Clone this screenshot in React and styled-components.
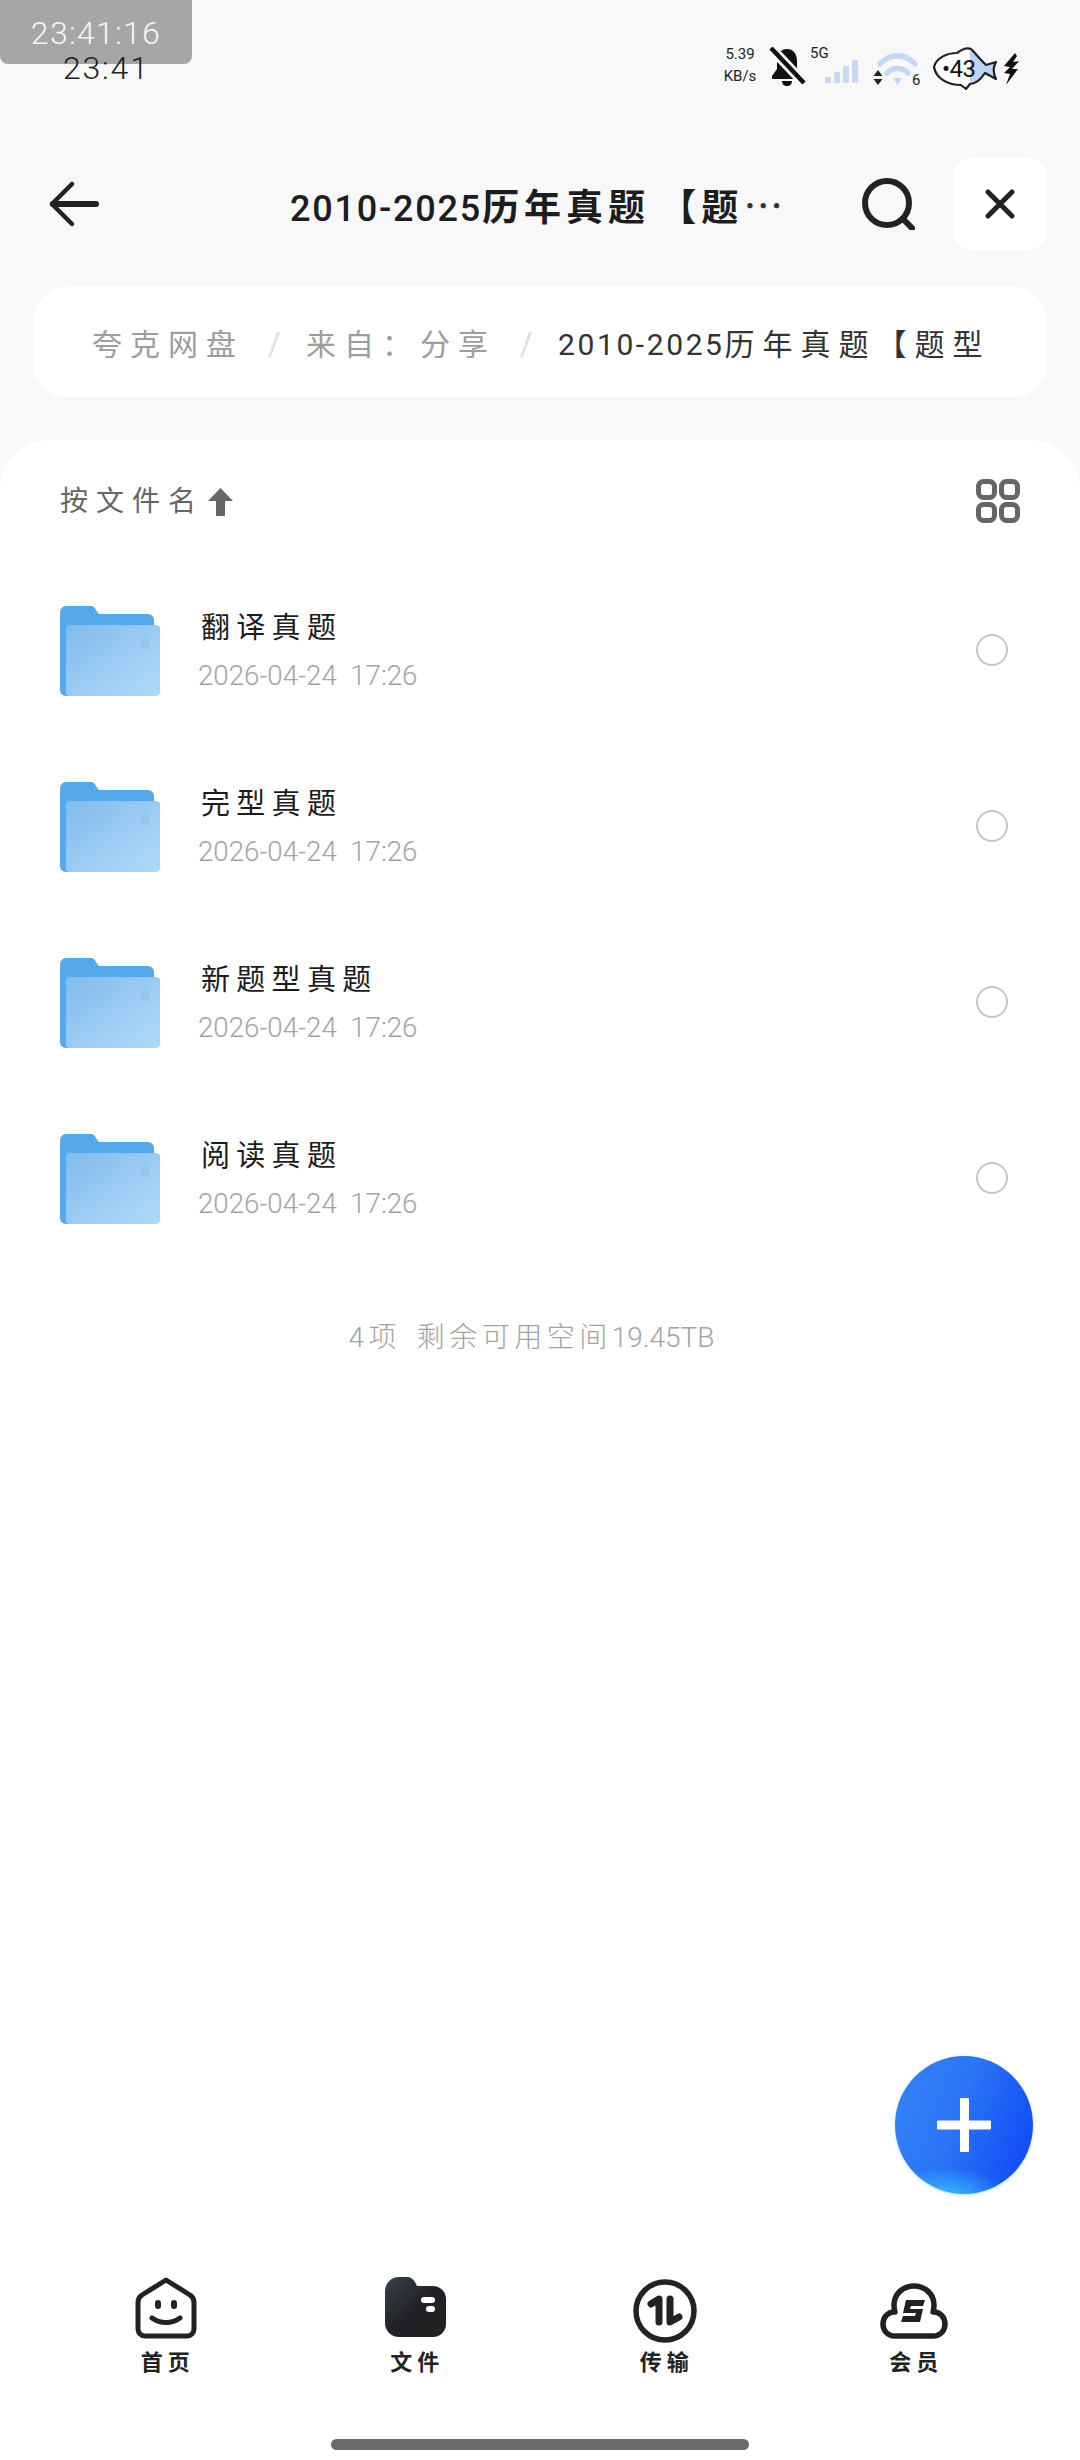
import React from "react";
import styled, { createGlobalStyle } from "styled-components";

const Global = createGlobalStyle`
  html, body { margin: 0; padding: 0; background: #fff; }
  body { font-family: Roboto, "Noto Sans CJK SC", sans-serif; }
  * { box-sizing: border-box; }
`;

const Page = styled.div`
  position: relative;
  width: 1080px;
  height: 2460px;
  overflow: hidden;
  background: #f8f8f8;
  display: flex;
  flex-direction: column;
`;

const TimeBadge = styled.div`
  position: absolute;
  left: 0;
  top: 0;
  width: 192px;
  height: 64px;
  border-radius: 0 0 8px 8px;
  background: #a6a6a6;
  color: #f6f6f6;
  font-size: 32px;
  font-weight: 300;
  line-height: 66px;
  letter-spacing: 1.3px;
  text-align: center;
`;

const StatusBar = styled.div`
  height: 157px;
  flex: none;
  display: flex;
  justify-content: space-between;
  align-items: flex-start;
  padding: 47px 61px 0 63px;
`;

const Clock = styled.div`
  position: relative;
  margin-top: 3px;
  font-size: 32px;
  font-weight: 300;
  line-height: 36px;
  letter-spacing: 1.8px;
  color: #222;
`;

const StatusIcons = styled.div`
  display: flex;
  align-items: flex-start;
`;

const Speed = styled.div`
  width: 48px;
  margin: -4px 4px 0 0;
  font-size: 15px;
  line-height: 22px;
  text-align: center;
  color: #222;
`;

const FiveG = styled.div`
  width: 20px;
  margin: -3px 0 0 4px;
  font-size: 15px;
  line-height: 18px;
  color: #222;
`;

const Fish = styled.div`
  position: relative;
  width: 64px;
  height: 43px;
  margin-left: 10px;
`;

const FishLabel = styled.span`
  position: absolute;
  left: 9px;
  top: 7px;
  font-size: 24px;
  line-height: 30px;
  letter-spacing: -0.5px;
  color: #111;
`;

const Header = styled.header`
  flex: none;
  height: 94px;
  padding: 0 33px 0 49px;
  display: flex;
  align-items: center;
`;

const BackButton = styled.div`
  width: 50px;
  height: 46px;
  flex: none;
`;

const Title = styled.h1`
  margin: 5px 0 0 191px;
  width: 498px;
  flex: none;
  font-size: 37px;
  font-weight: 700;
  line-height: 50px;
  letter-spacing: 5px;
  color: #1d1d1d;
  white-space: nowrap;
`;

const TitleLatin = styled.span`
  font-size: 36px;
  font-weight: 500;
  letter-spacing: 1.8px;
`;

const TitleBracket = styled.span`
  margin-left: 9px;
`;

const TitleDots = styled.span`
  font-family: "Noto Sans CJK SC", sans-serif;
  font-size: 40px;
  font-weight: 400;
  letter-spacing: 0;
  color: #333;
`;

const SearchButton = styled.div`
  width: 54px;
  height: 52px;
  margin-left: 73px;
  flex: none;
`;

const CloseButton = styled.div`
  width: 94px;
  height: 94px;
  margin-left: auto;
  border-radius: 20px;
  background: #fff;
  display: flex;
  align-items: center;
  justify-content: center;
`;

const Crumbs = styled.nav`
  flex: none;
  height: 110px;
  margin: 36px 33px 43px;
  padding: 5px 0 0 59px;
  border-radius: 34px;
  background: #fff;
  display: flex;
  align-items: center;
  white-space: nowrap;
  overflow: hidden;
`;

const Crumb = styled.span`
  font-size: 30px;
  line-height: 44px;
  letter-spacing: 8px;
  color: ${(p) => (p.$current ? "#333" : "#9d9d9d")};
`;

const CrumbLatin = styled.span`
  letter-spacing: 2.6px;
`;

const CrumbSep = styled.span`
  width: 12px;
  height: 25px;
  margin: 0 26px 0 24px;
  flex: none;
  background: #e2e2e2;
  clip-path: polygon(75% 0, 100% 0, 25% 100%, 0 100%);
`;

const Sheet = styled.main`
  flex: 1;
  min-height: 0;
  display: flex;
  flex-direction: column;
  background: #fff;
  border-radius: 50px 50px 0 0;
`;

const SortRow = styled.div`
  flex: none;
  height: 122px;
  padding: 0 60px;
  display: flex;
  align-items: center;
  justify-content: space-between;
`;

const SortLabel = styled.div`
  display: flex;
  align-items: center;
  padding-top: 2px;
  font-size: 28px;
  line-height: 40px;
  letter-spacing: 8px;
  color: #666;
`;

const SortArrow = styled.svg`
  width: 25px;
  height: 28px;
  margin-left: 4px;
`;

const FileList = styled.ul`
  margin: 0;
  padding: 0;
  list-style: none;
`;

const FileRow = styled.li`
  height: 176px;
  padding: 0 72px 0 60px;
  display: flex;
  align-items: center;
`;

const FolderIcon = styled.svg`
  width: 100px;
  height: 90px;
  margin-top: 2px;
  flex: none;
`;

const FileText = styled.div`
  flex: 1;
  margin-left: 38px;
  padding-top: 2px;
  display: flex;
  flex-direction: column;
`;

const FileName = styled.div`
  margin-left: 3px;
  font-size: 29px;
  line-height: 40px;
  letter-spacing: 6.3px;
  color: #1c1c1c;
`;

const FileDate = styled.div`
  margin-top: 10px;
  font-size: 27.700px;
  font-weight: 300;
  line-height: 36px;
  white-space: pre;
  color: #a3a3a3;
`;

const Radio = styled.div`
  width: 32px;
  height: 32px;
  border-radius: 50%;
  border: 2.5px solid #c6c6c6;
  flex: none;
`;

const Summary = styled.div`
  margin-top: 52px;
  padding-right: 17px;
  text-align: center;
  font-size: 28px;
  font-weight: 300;
  line-height: 40px;
  letter-spacing: 4.5px;
  word-spacing: -3.5px;
  white-space: pre;
  color: #a3a3a3;
`;

const SummaryLatin = styled.span`
  letter-spacing: 0;
`;

const Fab = styled.div`
  position: absolute;
  left: 895px;
  top: 2056px;
  width: 138px;
  height: 138px;
  border-radius: 50%;
  background:
    radial-gradient(ellipse 62px 28px at 38% 101%, #36b8ff 0%, rgba(54, 184, 255, 0) 100%),
    linear-gradient(110deg, #3484f7 0%, #2a74f6 45%, #1550f6 85%);
  box-shadow: 0 1px 3px rgba(90, 200, 255, 0.5);
  display: flex;
  align-items: center;
  justify-content: center;
`;

const BottomNav = styled.nav`
  position: absolute;
  left: 0;
  right: 0;
  top: 2277px;
  padding: 0 41px;
  display: grid;
  grid-template-columns: repeat(4, 1fr);
`;

const NavItem = styled.div`
  display: flex;
  flex-direction: column;
  align-items: center;
`;

const NavIcon = styled.div`
  height: 66px;
  display: flex;
  align-items: flex-start;
  justify-content: center;
`;

const NavLabel = styled.div`
  margin-left: 4px;
  font-size: 22px;
  font-weight: 700;
  line-height: 40px;
  letter-spacing: 5px;
  color: #222;
`;

const HomeBar = styled.div`
  position: absolute;
  left: 331px;
  top: 2439px;
  width: 418px;
  height: 11px;
  border-radius: 6px;
  background: #6b6b6b;
`;

const Folder = () => (
  <FolderIcon viewBox="0 0 100 90">
    <defs>
      <linearGradient id="front" x1="0" y1="0" x2="1" y2="1">
        <stop offset="0" stopColor="#82bbec" />
        <stop offset="0.75" stopColor="#a6d3f7" />
        <stop offset="1" stopColor="#aed8f9" />
      </linearGradient>
    </defs>
    <path
      d="M0 6a6 6 0 0 1 6-6h24c4 0 5 2 6 4l3 4h49a6 6 0 0 1 6 6v72a4 4 0 0 1-4 4H6a6 6 0 0 1-6-6z"
      fill="#55a9ea"
    />
    <rect x="6" y="19" width="94" height="71" rx="4" fill="url(#front)" />
    <path d="M81 32h8v11h-8z" fill="#8fbde6" opacity="0.45" />
  </FolderIcon>
);

const files = ["翻译真题", "完型真题", "新题型真题", "阅读真题"];

export default function App() {
  return (
    <Page>
      <Global />
      <TimeBadge>23:41:16</TimeBadge>
      <StatusBar>
        <Clock>23:41</Clock>
        <StatusIcons>
          <Speed>
            5.39
            <br />
            KB/s
          </Speed>
          <svg width="38" height="40" viewBox="0 0 38 40">
            <path d="M19 2c7 0 10 6 10 12v8l5 7v3H4v-3l5-7v-8C9 8 12 2 19 2z" fill="#111" />
            <path d="M14 34h10c0 3-2 5-5 5s-5-2-5-5z" fill="#111" />
            <path d="M1 -1L36 36" stroke="#f8f8f8" strokeWidth="10" />
            <path d="M3 1L36 36" stroke="#111" strokeWidth="4.500" />
          </svg>
          <FiveG>5G</FiveG>
          <svg width="33" height="38" viewBox="0 0 33 38" style={{ marginLeft: -5 }}>
            <g fill="#c8d9f4">
              <rect x="0" y="30" width="6" height="6" rx="1" />
              <rect x="9" y="25" width="6" height="11" rx="1" />
              <rect x="18" y="19" width="6" height="17" rx="1" />
              <rect x="27" y="13" width="6" height="23" rx="1" />
            </g>
          </svg>
          <svg width="55" height="44" viewBox="0 0 55 44" style={{ marginLeft: 10 }}>
            <path d="M12 17c10-11 25-11 35 0M19 26c6-6 15-6 21 0" fill="none" stroke="#c3d7f6" strokeWidth="5.500" strokeLinecap="round" />
            <path d="M25 31h9l-4.500 7z" fill="#c3d7f6" />
            <path d="M10 23l4.500 6h-9zM10 38l4.500-6h-9z" fill="#222" />
            <text x="44" y="38" fontSize="15" fill="#222" fontFamily="Roboto">6</text>
          </svg>
          <Fish>
            <svg width="64" height="43" viewBox="0 0 64 43">
              <path d="M1 20C3 11 14 6 24 6C28 3 33 0 38 2C42 6 47 12 53 18L63 15C60 20 60 26 63 32L52 26C48 32 42 37 37 37L33 42L28 38C14 38 3 31 1 20z" fill="#fff" />
              <path d="M37 2C42 6 47 12 53 18L63 15C60 20 60 26 63 32L52 26C48 32 42 37 37 37z" fill="#bcd3f6" />
              <path d="M1 20C3 11 14 6 24 6C28 3 33 0 38 2C42 6 47 12 53 18L63 15C60 20 60 26 63 32L52 26C48 32 42 37 37 37L33 42L28 38C14 38 3 31 1 20z" fill="none" stroke="#222" strokeWidth="2.200" strokeLinejoin="round" />
            </svg>
            <FishLabel>•43</FishLabel>
          </Fish>
          <svg width="16" height="32" viewBox="0 0 16 32" style={{ marginLeft: 6, marginTop: 6 }}>
            <path d="M12 0L1 13l6 1-6 6 6 1-4 11 12-16-6 0 7-8-6 1 4-6z" fill="#111" />
          </svg>
        </StatusIcons>
      </StatusBar>

      <Header>
        <BackButton>
          <svg width="50" height="46" viewBox="0 0 50 46" fill="none" stroke="#222" strokeLinecap="round" strokeLinejoin="round">
            <path d="M23 3L3 23l20 20" strokeWidth="4.500" />
            <path d="M4 23h43" strokeWidth="6" />
          </svg>
        </BackButton>
        <Title>
          <TitleLatin>2010-2025</TitleLatin>历年真题<TitleBracket>【</TitleBracket>题<TitleDots>…</TitleDots>
        </Title>
        <SearchButton>
          <svg width="54" height="52" viewBox="0 0 54 52" fill="none" stroke="#222" strokeWidth="6" strokeLinecap="round">
            <circle cx="26" cy="25" r="22" />
            <path d="M42 41l9 9" />
          </svg>
        </SearchButton>
        <CloseButton>
          <svg width="32" height="32" viewBox="0 0 32 32" fill="none" stroke="#222" strokeWidth="5" strokeLinecap="round">
            <path d="M4 4l24 24M28 4L4 28" />
          </svg>
        </CloseButton>
      </Header>

      <Crumbs>
        <Crumb>夸克网盘</Crumb>
        <CrumbSep />
        <Crumb>来自：分享</Crumb>
        <CrumbSep />
        <Crumb $current>
          <CrumbLatin>2010-2025</CrumbLatin>历年真题【题型
        </Crumb>
      </Crumbs>

      <Sheet>
        <SortRow>
          <SortLabel>
            按文件名
            <SortArrow viewBox="0 0 25 28">
              <path d="M12.500 0L25 13h-8v15H8V13H0z" fill="#666" />
            </SortArrow>
          </SortLabel>
          <svg width="44" height="44" viewBox="0 0 44 44" fill="none" stroke="#666" strokeWidth="5">
            <rect x="2.500" y="2.500" width="16" height="16" rx="5" />
            <rect x="25.500" y="2.500" width="16" height="16" rx="5" />
            <rect x="2.500" y="25.500" width="16" height="16" rx="5" />
            <rect x="25.500" y="25.500" width="16" height="16" rx="5" />
          </svg>
        </SortRow>
        <FileList>
          {files.map((name) => (
            <FileRow key={name}>
              <Folder />
              <FileText>
                <FileName>{name}</FileName>
                <FileDate>2026-04-24  17:26</FileDate>
              </FileText>
              <Radio />
            </FileRow>
          ))}
        </FileList>
        <Summary>
          4项  剩余可用空间<SummaryLatin>19.45TB</SummaryLatin>
        </Summary>
      </Sheet>

      <Fab>
        <svg width="54" height="54" viewBox="0 0 54 54" fill="#fff">
          <rect x="23" y="0" width="9" height="54" rx="1" />
          <rect x="0" y="22.500" width="54" height="9" rx="1" />
        </svg>
      </Fab>

      <BottomNav>
        <NavItem>
          <NavIcon>
            <svg width="62" height="62" viewBox="0 0 62 62" fill="none" stroke="#222" strokeWidth="5" strokeLinecap="round" strokeLinejoin="round">
              <path d="M31 3L55 18c3 2 4 4 4 7v27a7 7 0 0 1-7 7H10a7 7 0 0 1-7-7V25c0-3 1-5 4-7z" />
              <path d="M17 41c8 6 20 6 28 0" />
              <path d="M23 26v3M39 26v3" strokeWidth="6" />
            </svg>
          </NavIcon>
          <NavLabel>首页</NavLabel>
        </NavItem>
        <NavItem>
          <NavIcon>
            <svg width="61" height="60" viewBox="0 0 61 60">
              <defs>
                <linearGradient id="navFolder" x1="0" y1="0" x2="1" y2="1">
                  <stop offset="0" stopColor="#3a424b" />
                  <stop offset="0.5" stopColor="#212226" />
                  <stop offset="1" stopColor="#222" />
                </linearGradient>
              </defs>
              <path d="M0 14A14 14 0 0 1 14 0h8c4 0 6 2 8 5l2 4h16a13 13 0 0 1 13 13v25a13 13 0 0 1-13 13H14A14 14 0 0 1 0 46z" fill="url(#navFolder)" />
              <rect x="36" y="20" width="14" height="6" rx="3" fill="#fff" />
              <rect x="41" y="29" width="9" height="6" rx="3" fill="#fff" />
            </svg>
          </NavIcon>
          <NavLabel>文件</NavLabel>
        </NavItem>
        <NavItem>
          <NavIcon>
            <svg width="64" height="64" viewBox="0 0 64 64" style={{ marginTop: 2 }} fill="none" stroke="#222" strokeLinecap="round">
              <circle cx="32" cy="32" r="29" strokeWidth="5.500" />
              <path d="M26 43V20l-8 5" strokeWidth="7" strokeLinejoin="round" />
              <path d="M37 20v23l9-5" strokeWidth="7" strokeLinejoin="round" />
            </svg>
          </NavIcon>
          <NavLabel>传输</NavLabel>
        </NavItem>
        <NavItem>
          <NavIcon>
            <svg width="68" height="56" viewBox="0 0 68 56" style={{ marginTop: 6 }}>
              <path d="M15 53C7 53 3 47 3 41c0-7 5-12 11-12h1c-1-3-1-5-1-7C14 11 23 3 34 3s20 8 20 19c0 2 0 4-1 7h1c6 0 11 5 11 12 0 6-4 12-12 12z" fill="none" stroke="#222" strokeWidth="5.500" strokeLinejoin="round" />
              <path d="M26 17h19l-2 6H31l-1 3h13l-3 13H21l2-6h12l1-3H23z" fill="#222" />
            </svg>
          </NavIcon>
          <NavLabel>会员</NavLabel>
        </NavItem>
      </BottomNav>
      <HomeBar />
    </Page>
  );
}
